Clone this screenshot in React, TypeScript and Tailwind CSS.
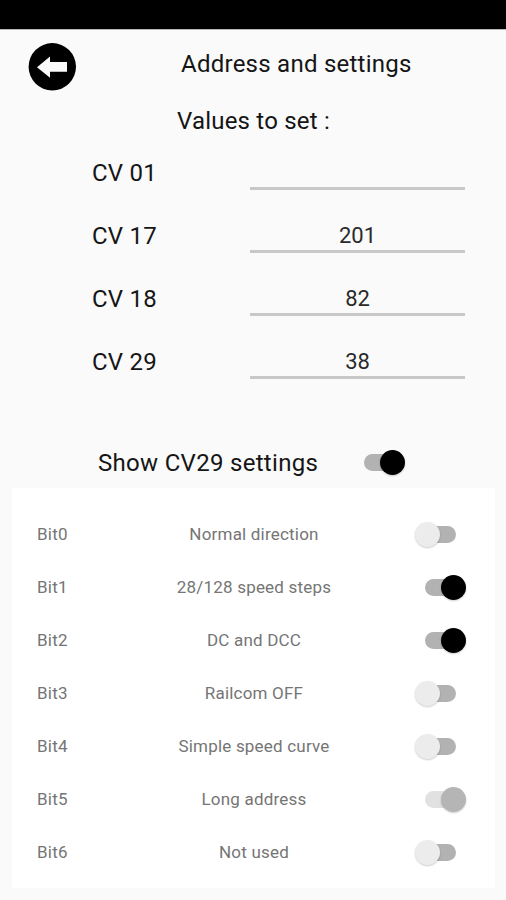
import React from 'react';

interface SwitchProps {
  checked: boolean;
  disabled?: boolean;
  label: string;
  onChange: () => void;
}

function Switch({ checked, disabled, label, onChange }: SwitchProps) {
  let track = 'bg-[#b2b2b2]';
  let thumb = 'bg-[#ececec]';
  if (disabled) {
    track = 'bg-[#e1e1e1]';
    thumb = 'bg-[#b5b5b5]';
  } else if (checked) {
    thumb = 'bg-black';
  }

  return (
    <button
      type="button"
      role="switch"
      aria-checked={checked}
      aria-label={label}
      disabled={disabled}
      onClick={onChange}
      className="flex h-[26px] w-[51px] shrink-0 items-center"
    >
      <span className={`flex h-[17px] w-[32px] items-center rounded-full ${track} ${checked ? 'ml-[10px] justify-end' : 'ml-[9px]'}`}>
        <span className={`h-[25px] w-[25px] shrink-0 rounded-full shadow-[0_1px_2px_rgba(0,0,0,0.2)] ${thumb} ${checked ? '-mr-[9px]' : '-ml-[9px]'}`} />
      </span>
    </button>
  );
}

const cvValues = [
  { name: 'CV 01', value: '' },
  { name: 'CV 17', value: '201' },
  { name: 'CV 18', value: '82' },
  { name: 'CV 29', value: '38' }
];

const bits = [
  { label: 'Normal direction', on: false },
  { label: '28/128 speed steps', on: true },
  { label: 'DC and DCC', on: true },
  { label: 'Railcom OFF', on: false },
  { label: 'Simple speed curve', on: false },
  { label: 'Long address', on: true, disabled: true },
  { label: 'Not used', on: false }
];

export default function App() {
  const [showSettings, setShowSettings] = React.useState(true);
  const [states, setStates] = React.useState(bits.map(bit => bit.on));

  const toggleBit = (index: number) => {
    setStates(states.map((on, i) => (i === index ? !on : on)));
  };

  return (
    <div className="flex h-[900px] w-[506px] flex-col overflow-hidden bg-[#fafafa] font-[Roboto,sans-serif] text-[#151515]">
      <div className="h-[30px] shrink-0 border-b border-[#b8b8b8] bg-black" />

      <header className="flex h-[68px] shrink-0 pl-7">
        <button type="button" aria-label="Back" className="mt-[13px] h-12 w-12">
          <svg viewBox="0 0 48 48" className="h-12 w-12">
            <circle cx="24.3" cy="23.8" r="23.7" fill="#000" />
            <path d="M9 24.3 L22 13.5 V19 H39 V28.8 H22 V34.8 Z" fill="#fafafa" />
          </svg>
        </button>
        <h1 className="ml-[105px] mt-4 whitespace-nowrap text-2xl leading-9 tracking-[0.25px]">Address and settings</h1>
      </header>

      <h2 className="ml-[177px] mt-[5px] h-9 shrink-0 text-2xl leading-9 tracking-[0.2px]">Values to set :</h2>

      <div className="mt-[2px] shrink-0">
        {cvValues.map(cv => (
          <div key={cv.name} className="flex h-[63.2px] items-center pl-[92px]">
            <span className="w-[158px] text-2xl leading-9 tracking-[0.2px]">{cv.name}</span>
            <span className="flex h-[34px] w-[215px] justify-center border-b-[3px] border-[#c8c8c8] text-[22px] leading-[34px] text-[#2a2a2a]">
              {cv.value}
            </span>
          </div>
        ))}
      </div>

      <div className="mt-11 flex h-[50px] shrink-0 items-center pl-[98px]">
        <span className="w-[256px] text-2xl tracking-[0.3px]">Show CV29 settings</span>
        <Switch checked={showSettings} label="Show CV29 settings" onChange={() => setShowSettings(!showSettings)} />
      </div>

      {showSettings && (
        <div className="ml-3 h-[400px] w-[483px] shrink-0 bg-white pt-5 text-[17px] tracking-[0.2px] text-[#757575]">
          {bits.map((bit, index) => (
            <div key={bit.label} className="flex h-[53px] items-center pl-[25px]">
              <span className="w-[84px]">Bit{index}</span>
              <span className="w-[266px] text-center">{bit.label}</span>
              <span className="ml-[28px]">
                <Switch
                  checked={states[index]}
                  disabled={bit.disabled}
                  label={bit.label}
                  onChange={() => toggleBit(index)}
                />
              </span>
            </div>
          ))}
        </div>
      )}
    </div>
  );
}
